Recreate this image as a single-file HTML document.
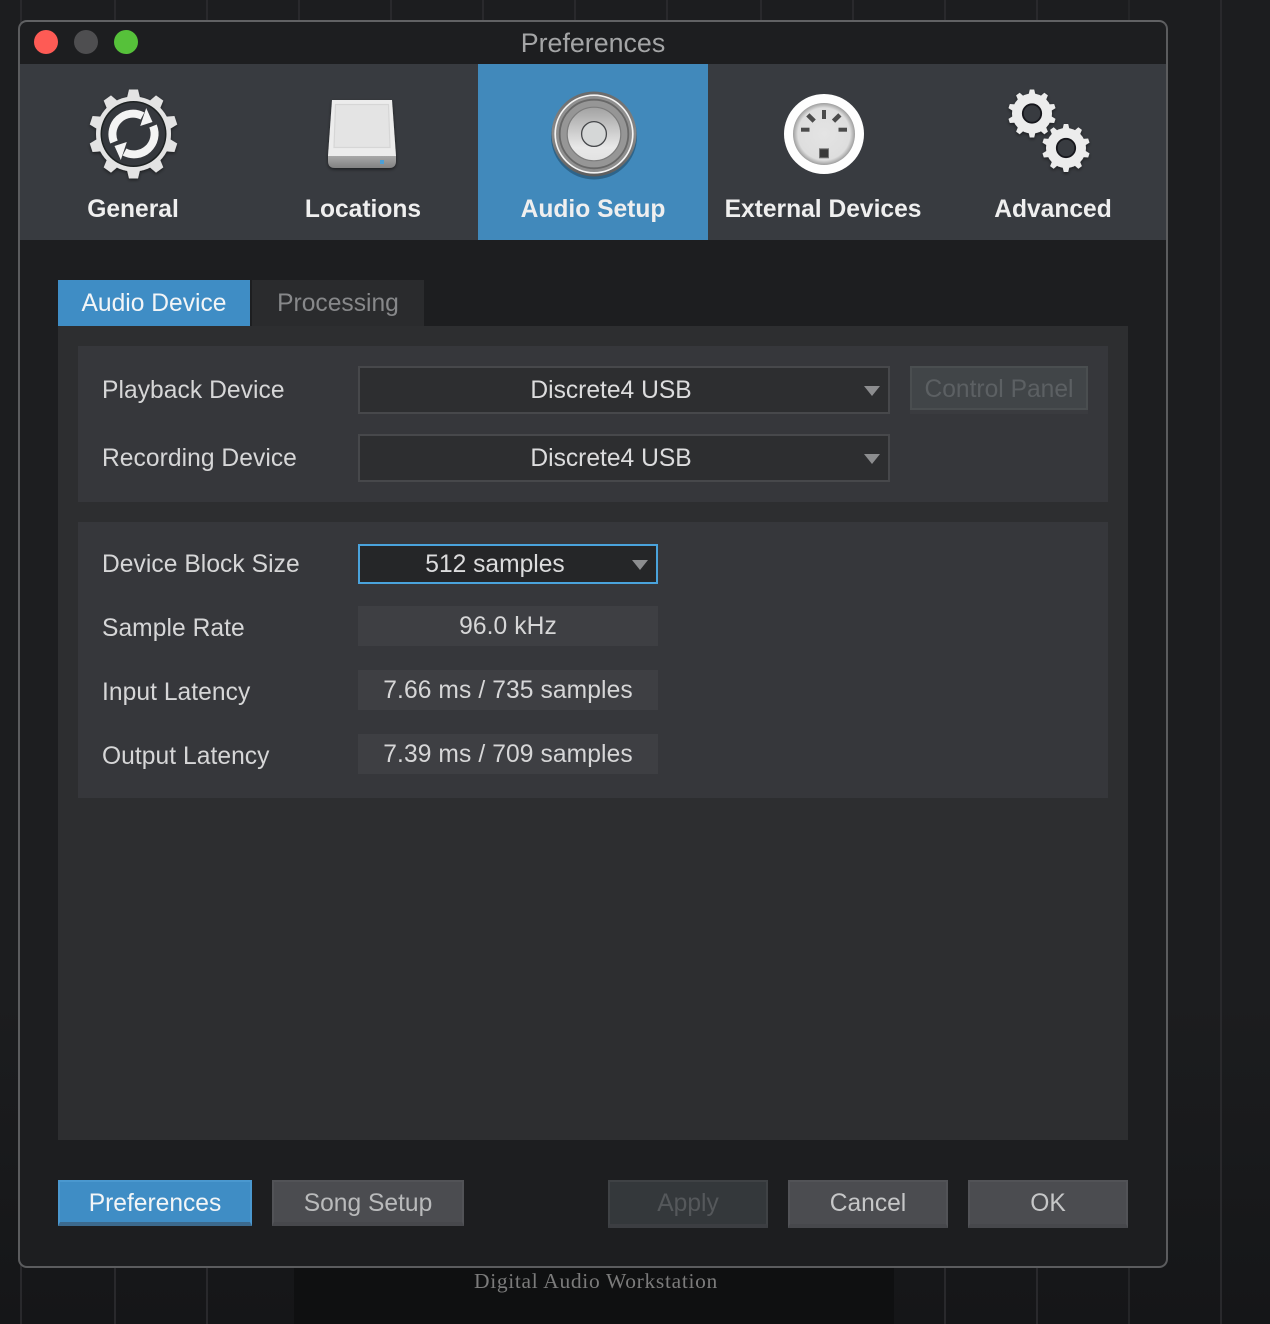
<!DOCTYPE html>
<html>
<head>
<meta charset="utf-8">
<style>
html,body{margin:0;padding:0;background:#1c1d1f;}
#root{position:relative;width:1270px;height:1324px;overflow:hidden;background:#1c1d1f;font-family:"Liberation Sans",sans-serif;}
.a{position:absolute;box-sizing:border-box;}
.t{position:absolute;white-space:nowrap;text-align:center;}
.l{position:absolute;white-space:nowrap;left:102px;font-size:24.6px;letter-spacing:.05px;color:#d6d6d7;line-height:30px;}
.v{position:absolute;top:0;width:2px;height:1324px;background:#29292c;}
.nav{position:absolute;top:193px;height:34px;line-height:34px;font-weight:bold;font-size:24.6px;color:#efefef;text-align:center;width:230px;}
.btn{position:absolute;box-sizing:border-box;text-align:center;font-size:24.6px;}
.ro{position:absolute;left:358px;width:300px;height:40px;background:#3e3f43;color:#d6d6d7;font-size:24.6px;letter-spacing:.1px;line-height:42px;text-align:center;}
.dd{position:absolute;box-sizing:border-box;left:358px;width:532px;height:48px;border:2px solid #47484b;background:#2d2e30;color:#dcdcdd;font-size:24.6px;line-height:46px;text-align:center;padding-right:26px;}
.tri{position:absolute;width:0;height:0;border-left:8px solid transparent;border-right:8px solid transparent;border-top:10px solid #8c8d8f;}
</style>
</head>
<body>
<div id="root">
  <div class="a" style="left:0;top:1000px;width:1270px;height:324px;background:linear-gradient(#1c1d1f,#151618)"></div>
  <div class="v" style="left:20px"></div><div class="v" style="left:114px"></div><div class="v" style="left:206px"></div><div class="v" style="left:298px"></div><div class="v" style="left:390px"></div><div class="v" style="left:482px"></div><div class="v" style="left:574px"></div><div class="v" style="left:666px"></div><div class="v" style="left:760px"></div><div class="v" style="left:852px"></div><div class="v" style="left:944px"></div><div class="v" style="left:1036px"></div><div class="v" style="left:1128px;background:#242527"></div><div class="v" style="left:1220px"></div>
  <div class="a" style="left:294px;top:1260px;width:600px;height:64px;background:#0f1011"></div>
  <div class="t" style="left:474px;top:1267px;width:244px;font-family:'Liberation Serif',serif;font-size:21.5px;line-height:28px;color:#7b7b7b;letter-spacing:.67px;text-align:left">Digital Audio Workstation</div>

  <!-- window -->
  <div class="a" style="left:18px;top:20px;width:1150px;height:1248px;background:#1d1e20;border:2px solid #5b5c5e;border-top-color:#616264;border-radius:9px;overflow:hidden">
    <div class="a" style="left:0;top:42px;width:1146px;height:176px;background:#383b40"></div>
  </div>
  <div class="a" style="left:34px;top:30px;width:24px;height:24px;border-radius:50%;background:#fe5b55"></div>
  <div class="a" style="left:74px;top:30px;width:24px;height:24px;border-radius:50%;background:#4e4e50"></div>
  <div class="a" style="left:114px;top:30px;width:24px;height:24px;border-radius:50%;background:#56c13a"></div>
  <div class="t" style="left:393px;top:27px;width:400px;font-size:26.8px;line-height:32px;color:#a4a5a6">Preferences</div>

  <div class="a" style="left:478px;top:64px;width:230px;height:176px;background:#4189bb"></div>

  <svg class="a" style="left:0;top:0" width="1270" height="260" viewBox="0 0 1270 260">
    <defs>
      <linearGradient id="cone2" x1="0" y1="0" x2="0" y2="1"><stop offset="0" stop-color="#a2a2a2"/><stop offset=".75" stop-color="#e8e8e8"/><stop offset="1" stop-color="#e2e2e2"/></linearGradient>
      <linearGradient id="drv" x1="0" y1="0" x2="0" y2="1"><stop offset="0" stop-color="#a8a8a8"/><stop offset="1" stop-color="#828282"/></linearGradient>
      <linearGradient id="spk" x1="0" y1="0" x2="0" y2="1"><stop offset="0" stop-color="#6a6a6a"/><stop offset=".5" stop-color="#8a8a8a"/><stop offset="1" stop-color="#5c5c5c"/></linearGradient>
      <radialGradient id="midi" cx="50%" cy="50%" r="50%"><stop offset="0" stop-color="#e4e4e4"/><stop offset=".84" stop-color="#dedede"/><stop offset="1" stop-color="#9d9d9d"/></radialGradient>
      <filter id="sh" x="-30%" y="-30%" width="160%" height="160%"><feDropShadow dx="0" dy="1.5" stdDeviation="1.5" flood-color="#000" flood-opacity=".5"/></filter>
      <g id="sm">
        <circle r="20" fill="#ececec"/>
        <g fill="#ececec">
          <path d="M-2.2 -24 H2.2 L3.6 -18 H-3.6 Z"/>
          <path d="M-2.2 -24 H2.2 L3.6 -18 H-3.6 Z" transform="rotate(36)"/>
          <path d="M-2.2 -24 H2.2 L3.6 -18 H-3.6 Z" transform="rotate(72)"/>
          <path d="M-2.2 -24 H2.2 L3.6 -18 H-3.6 Z" transform="rotate(108)"/>
          <path d="M-2.2 -24 H2.2 L3.6 -18 H-3.6 Z" transform="rotate(144)"/>
          <path d="M-2.2 -24 H2.2 L3.6 -18 H-3.6 Z" transform="rotate(180)"/>
          <path d="M-2.2 -24 H2.2 L3.6 -18 H-3.6 Z" transform="rotate(216)"/>
          <path d="M-2.2 -24 H2.2 L3.6 -18 H-3.6 Z" transform="rotate(252)"/>
          <path d="M-2.2 -24 H2.2 L3.6 -18 H-3.6 Z" transform="rotate(288)"/>
          <path d="M-2.2 -24 H2.2 L3.6 -18 H-3.6 Z" transform="rotate(324)"/>
        </g>
        <circle r="9.2" fill="#383b40" stroke="#17181a" stroke-width="1.8"/>
      </g>
    </defs>

    <!-- General gear -->
    <g transform="translate(133.5 134)" filter="url(#sh)">
      <g fill="#e3e3e3">
        <path d="M-4.5 -44.5 H4.5 L7 -34 H-7 Z"/>
        <path d="M-4.5 -44.5 H4.5 L7 -34 H-7 Z" transform="rotate(36)"/>
        <path d="M-4.5 -44.5 H4.5 L7 -34 H-7 Z" transform="rotate(72)"/>
        <path d="M-4.5 -44.5 H4.5 L7 -34 H-7 Z" transform="rotate(108)"/>
        <path d="M-4.5 -44.5 H4.5 L7 -34 H-7 Z" transform="rotate(144)"/>
        <path d="M-4.5 -44.5 H4.5 L7 -34 H-7 Z" transform="rotate(180)"/>
        <path d="M-4.5 -44.5 H4.5 L7 -34 H-7 Z" transform="rotate(216)"/>
        <path d="M-4.5 -44.5 H4.5 L7 -34 H-7 Z" transform="rotate(252)"/>
        <path d="M-4.5 -44.5 H4.5 L7 -34 H-7 Z" transform="rotate(288)"/>
        <path d="M-4.5 -44.5 H4.5 L7 -34 H-7 Z" transform="rotate(324)"/>
        <circle r="37.5"/>
      </g>
      <circle r="33" fill="#1f2022"/>
      <circle r="31.5" fill="#36383c"/>
      <g fill="none" stroke="#f4f4f4" stroke-width="8">
        <path d="M-19.5 8 A20.5 20.5 0 0 1 9 -18"/>
        <path d="M19.5 -8 A20.5 20.5 0 0 1 -9 18"/>
      </g>
      <path d="M19 -12 L12.7 -26 L6.7 -8 Z" fill="#f4f4f4"/>
      <path d="M-19 12 L-12.7 26 L-6.7 8 Z" fill="#f4f4f4"/>
    </g>

    <!-- Drive -->
    <g filter="url(#sh)">
      <path d="M332 100 H392 L396 156 H328 Z" fill="#ececec"/>
      <path d="M335.5 104.5 H388.5 L390 147.5 H334 Z" fill="#e4e4e4" stroke="#d6d6d6" stroke-width="1.2"/>
      <path d="M328 156 H396 V161 Q396 168 389 168 H335 Q328 168 328 161 Z" fill="url(#drv)"/>
      <rect x="380" y="160" width="4" height="4" fill="#4b9fd6"/>
    </g>

    <!-- Speaker -->
    <g transform="translate(594 134)">
      <circle r="43" cy="2.5" fill="#1d4663" opacity=".55"/>
      <circle r="42.5" fill="url(#spk)"/>
      <circle r="38.8" fill="#8f8f8f" stroke="#f4f4f4" stroke-width="1.7"/>
      <circle r="34.3" fill="#969696" stroke="#686868" stroke-width="1.8"/>
      <circle r="26.8" fill="url(#cone2)" stroke="#7c7c7c" stroke-width="1.2"/>
      <circle r="12.4" fill="#d5d7d7" stroke="#45474a" stroke-width="1.3"/>
    </g>

    <!-- MIDI -->
    <g transform="translate(824 134)">
      <circle r="40" fill="#fefefe"/>
      <circle r="31" fill="url(#midi)"/>
      <g fill="#4b4b4b">
        <rect x="-2" y="-24" width="4" height="9"/>
        <rect x="-2.3" y="-4.5" width="4.6" height="9" transform="translate(-13 -16) rotate(-45)"/>
        <rect x="-2.3" y="-4.5" width="4.6" height="9" transform="translate(12.7 -16) rotate(45)"/>
        <rect x="14.5" y="-6.3" width="8.5" height="4"/>
        <rect x="-23" y="-6.3" width="8.5" height="4"/>
      </g>
      <rect x="-4.5" y="14.8" width="9" height="9" fill="#3a3a3a" stroke="#777" stroke-width="1"/>
    </g>

    <!-- Advanced gears -->
    <use href="#sm" transform="translate(1032 113.5)" filter="url(#sh)"/>
    <use href="#sm" transform="translate(1066 148)" filter="url(#sh)"/>
  </svg>

  <div class="nav" style="left:18px">General</div>
  <div class="nav" style="left:248px">Locations</div>
  <div class="nav" style="left:478px">Audio Setup</div>
  <div class="nav" style="left:708px">External Devices</div>
  <div class="nav" style="left:938px">Advanced</div>

  <!-- tabs + panel -->
  <div class="a" style="left:58px;top:326px;width:1070px;height:814px;background:#2d2e30"></div>
  <div class="t" style="left:58px;top:280px;width:192px;height:46px;background:#3f8dc5;color:#f2f5f7;font-size:24.6px;line-height:48px">Audio Device</div>
  <div class="t" style="left:252px;top:280px;width:172px;height:46px;background:#2a2b2d;color:#87888a;font-size:24.6px;line-height:48px">Processing</div>

  <div class="a" style="left:78px;top:346px;width:1030px;height:156px;background:#36373b"></div>
  <div class="a" style="left:78px;top:522px;width:1030px;height:276px;background:#36373b"></div>

  <div class="l" style="top:376px">Playback Device</div>
  <div class="l" style="top:444px">Recording Device</div>
  <div class="dd" style="top:366px">Discrete4 USB</div>
  <div class="dd" style="top:434px">Discrete4 USB</div>
  <div class="tri" style="left:864px;top:386px"></div>
  <div class="tri" style="left:864px;top:454px"></div>

  <div class="a" style="left:910px;top:410px;width:178px;height:4px;background:#3a3b3f"></div>
  <div class="btn" style="left:910px;top:366px;width:178px;height:44px;background:#414548;border:2px solid #4a4e50;color:#5c6063;line-height:44px">Control Panel</div>

  <div class="l" style="top:550px">Device Block Size</div>
  <div class="l" style="top:614px">Sample Rate</div>
  <div class="l" style="top:678px">Input Latency</div>
  <div class="l" style="top:742px">Output Latency</div>

  <div class="a" style="left:358px;top:544px;width:300px;height:40px;border:2px solid #4aa3dc;background:#252628;color:#dcdcdd;font-size:24.6px;line-height:38px;text-align:center;padding-right:26px">512 samples</div>
  <div class="tri" style="left:632px;top:560px"></div>
  <div class="ro" style="top:606px">96.0 kHz</div>
  <div class="ro" style="top:670px">7.66 ms / 735 samples</div>
  <div class="ro" style="top:734px">7.39 ms / 709 samples</div>

  <!-- bottom buttons -->
  <div class="btn" style="left:58px;top:1180px;width:194px;height:46px;background:#3f8dc5;border:2px solid #4a98cf;border-bottom:4px solid #3c6a8e;color:#f2f5f7;line-height:43px">Preferences</div>
  <div class="btn" style="left:272px;top:1180px;width:192px;height:46px;background:#4b4c50;border:2px solid #525357;border-bottom:4px solid #47484c;color:#b9babb;line-height:43px">Song Setup</div>
  <div class="btn" style="left:608px;top:1180px;width:160px;height:48px;background:#34383b;border:2px solid #3f4245;border-bottom:4px solid #3c3e42;color:#55585b;line-height:44px">Apply</div>
  <div class="btn" style="left:788px;top:1180px;width:160px;height:48px;background:#4b4c50;border:2px solid #525357;border-bottom:4px solid #47484c;color:#c6c7c8;line-height:44px">Cancel</div>
  <div class="btn" style="left:968px;top:1180px;width:160px;height:48px;background:#4b4c50;border:2px solid #525357;border-bottom:4px solid #47484c;color:#c6c7c8;line-height:44px">OK</div>
</div>
</body>
</html>
